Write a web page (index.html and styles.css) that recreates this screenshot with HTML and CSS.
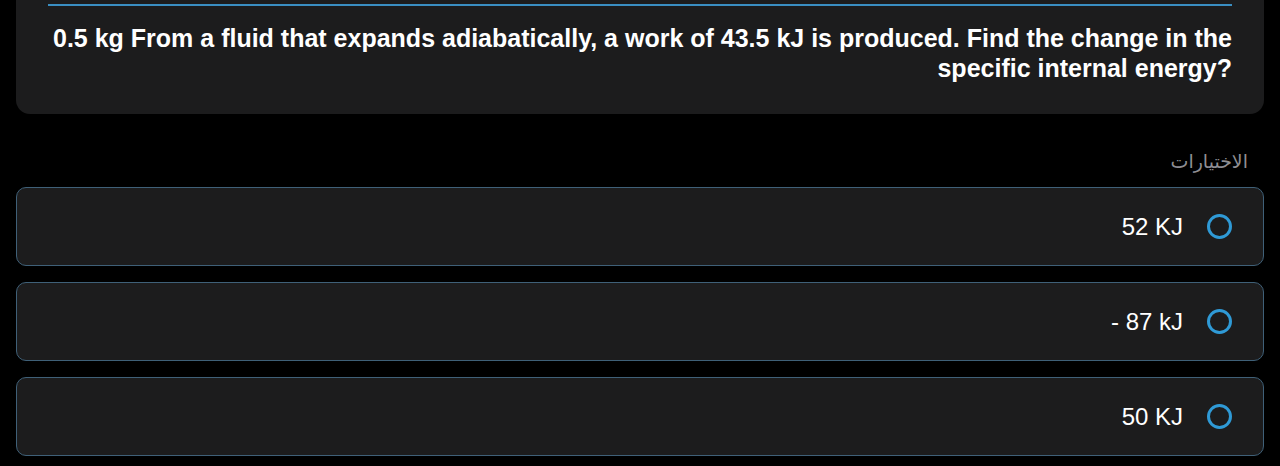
FILE: index.html
```html
<!DOCTYPE html>
<html lang="ar">
<head>
<meta charset="utf-8">
<link rel="stylesheet" href="styles.css">
</head>
<body>
<div class="page">
  <div class="question-card">
    <div class="progress-line"></div>
    <p class="question-text">0.5 kg From a fluid that expands adiabatically, a work of 43.5 kJ is produced. Find the change in the specific internal energy?</p>
  </div>
  <div class="choices-label">الاختيارات</div>
  <div class="options">
    <div class="option"><span class="radio"></span><span class="option-text">52 KJ</span></div>
    <div class="option"><span class="radio"></span><span class="option-text">- 87 kJ</span></div>
    <div class="option"><span class="radio"></span><span class="option-text">50 KJ</span></div>
  </div>
</div>
</body>
</html>
```

FILE: styles.css
```css
html, body {
  margin: 0;
  padding: 0;
  background: #000;
}
body {
  font-family: "Liberation Sans", Arial, sans-serif;
  color: #fff;
}
.page {
  padding: 0 16px;
}
.question-card {
  background: #1c1c1d;
  border-radius: 0 0 14px 14px;
  padding: 4px 32px 31px 24px;
}
.progress-line {
  height: 2px;
  margin-left: 8px;
  background: #3a8ec2;
}
.question-text {
  margin: 17px 0 0;
  font-size: 25px;
  line-height: 30px;
  font-weight: bold;
  text-align: right;
}
.choices-label {
  direction: rtl;
  font-family: "DejaVu Sans", sans-serif;
  font-size: 19px;
  color: #8e8e93;
  padding: 35px 16px 0 0;
  line-height: 24px;
}
.options {
  display: flex;
  flex-direction: column;
  gap: 16px;
  margin-top: 14px;
}
.option {
  height: 77px;
  background: #1c1c1d;
  border: 1px solid #3f6078;
  border-radius: 10px;
  display: flex;
  flex-direction: row-reverse;
  align-items: center;
  padding: 0 31px 0 0;
  gap: 24px;
}
.option-text {
  font-size: 24px;
  color: #fff;
}
.radio {
  width: 19px;
  height: 19px;
  border: 3px solid #2f9ad6;
  border-radius: 50%;
  flex: none;
}
```
